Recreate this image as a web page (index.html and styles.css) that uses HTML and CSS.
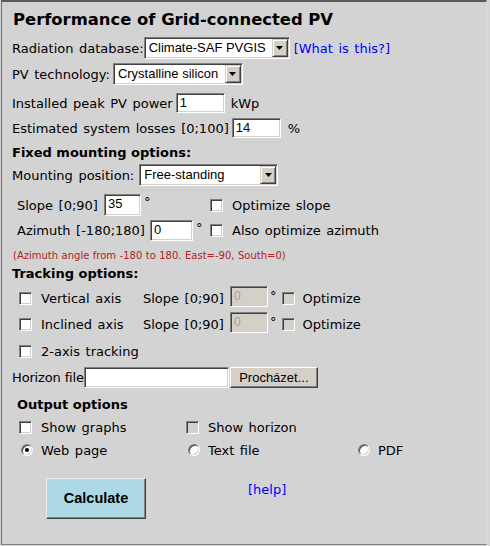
FILE: index.html
```html
<!DOCTYPE html>
<html>
<head>
<meta charset="utf-8">
<link rel="stylesheet" href="styles.css">
</head>
<body>
<div class="panel">
  <div class="title">Performance of Grid-connected PV</div>

  <div class="row r-db">
    <span class="lbl">Radiation database:</span>
    <span class="select w-db"><span class="sv">Climate-SAF PVGIS</span><span class="sb"><svg width="7" height="4" viewBox="0 0 7 4"><path d="M0 0h7L3.5 4z" fill="#000"/></svg></span></span>
    <a class="link what">[What is this?]</a>
  </div>

  <div class="row r-tech">
    <span class="lbl">PV technology:</span>
    <span class="select w-tech"><span class="sv">Crystalline silicon</span><span class="sb"><svg width="7" height="4" viewBox="0 0 7 4"><path d="M0 0h7L3.5 4z" fill="#000"/></svg></span></span>
  </div>

  <div class="row r-peak">
    <span class="lbl">Installed peak PV power</span>
    <span class="input w-peak">1</span>
    <span class="unit u-kwp">kWp</span>
  </div>

  <div class="row r-loss">
    <span class="lbl">Estimated system losses [0;100]</span>
    <span class="input w-loss">14</span>
    <span class="unit u-pct">%</span>
  </div>

  <div class="row r-fixed heading">Fixed mounting options:</div>

  <div class="row r-mount">
    <span class="lbl">Mounting position:</span>
    <span class="select w-mount"><span class="sv">Free-standing</span><span class="sb"><svg width="7" height="4" viewBox="0 0 7 4"><path d="M0 0h7L3.5 4z" fill="#000"/></svg></span></span>
  </div>

  <div class="row r-slope indent">
    <span class="angle-group">
      <span class="lbl">Slope [0;90]</span>
      <span class="input w-slope">35</span>
      <span class="deg">°</span>
    </span>
    <span class="cb"></span>
    <span class="cbl">Optimize slope</span>
  </div>

  <div class="row r-azi indent">
    <span class="angle-group">
      <span class="lbl">Azimuth [-180;180]</span>
      <span class="input w-azi">0</span>
      <span class="deg">°</span>
    </span>
    <span class="cb"></span>
    <span class="cbl">Also optimize azimuth</span>
  </div>

  <div class="row r-note note">(Azimuth angle from -180 to 180. East=-90, South=0)</div>

  <div class="row r-track heading">Tracking options:</div>

  <div class="row r-vert track">
    <span class="cb"></span>
    <span class="tname">Vertical axis</span>
    <span class="tslope">Slope [0;90]</span>
    <span class="input disabled w-track">0</span>
    <span class="deg d-track">°</span>
    <span class="cb cb-gray"></span>
    <span class="cbl">Optimize</span>
  </div>

  <div class="row r-incl track">
    <span class="cb"></span>
    <span class="tname">Inclined axis</span>
    <span class="tslope">Slope [0;90]</span>
    <span class="input disabled w-track">0</span>
    <span class="deg d-track">°</span>
    <span class="cb cb-gray"></span>
    <span class="cbl">Optimize</span>
  </div>

  <div class="row r-2axis track">
    <span class="cb"></span>
    <span class="tname">2-axis tracking</span>
  </div>

  <div class="row r-horizon">
    <span class="lbl hlbl">Horizon file</span>
    <span class="input w-file"></span>
    <span class="btn browse">Procházet...</span>
  </div>

  <div class="row r-output heading out-head">Output options</div>

  <div class="row r-graphs outgrid">
    <span class="ocol c1"><span class="cb"></span><span class="cbl">Show graphs</span></span>
    <span class="ocol c2"><span class="cb cb-disabled"></span><span class="cbl">Show horizon</span></span>
  </div>

  <div class="row r-web outgrid">
    <span class="ocol c1 rc"><span class="radio checked"></span><span class="cbl">Web page</span></span>
    <span class="ocol c2 rc"><span class="radio"></span><span class="cbl">Text file</span></span>
    <span class="ocol c3 rc"><span class="radio"></span><span class="cbl">PDF</span></span>
  </div>

  <div class="row r-calc">
    <span class="btn calc">Calculate</span>
    <a class="link help">[help]</a>
  </div>
</div>
</body>
</html>
```

FILE: styles.css
```css
html, body {
  margin: 0;
  padding: 0;
  background: #d6d6d6;
}

body {
  width: 490px;
  height: 546px;
  font-family: "DejaVu Sans", Verdana, sans-serif;
  font-size: 13px;
  color: #000;
}

.panel {
  box-sizing: border-box;
  margin-left: 1px;
  width: 486px;
  height: 545px;
  background: #d3d3d3;
  border-top: 2px solid #5a5a5a;
  border-left: 1px solid #6e6e6e;
  border-bottom: 1px solid #808080;
  border-right: 1px solid #dadada;
  padding: 6px 0 0 10px;
  word-spacing: 1.4px;
}

.title {
  height: 24px;
  line-height: 24px;
  font-weight: bold;
  font-size: 16.4px;
  padding-left: 1px;
  word-spacing: 0;
}

.row {
  display: flex;
  align-items: center;
  height: 21px;
  white-space: nowrap;
}

.lbl { display: inline-block; }

/* vertical rhythm */
.r-db { margin-top: 5px; height: 22px; }
.r-tech { margin-top: 4px; height: 22px; }
.r-peak { margin-top: 8px; height: 20px; }
.r-loss { margin-top: 5px; height: 20px; }
.r-fixed { margin-top: 4px; height: 20px; }
.r-mount { margin-top: 2px; height: 22px; }
.r-slope { margin-top: 8px; height: 22px; }
.r-azi { margin-top: 4px; height: 21px; }
.r-note { margin-top: 7px; height: 14px; }
.r-track { margin-top: 1px; height: 20px; }
.r-vert { margin-top: 5px; height: 21px; }
.r-incl { margin-top: 5px; height: 21px; }
.r-2axis { margin-top: 6px; height: 20px; }
.r-horizon { margin-top: 6px; height: 21px; }
.r-output { margin-top: 6px; height: 20px; }
.r-graphs { margin-top: 3px; height: 20px; }
.r-web { margin-top: 3px; height: 20px; }
.r-calc { margin-top: 18px; height: 40px; }

.heading {
  font-weight: bold;
  font-size: 13px;
  word-spacing: 0;
}

.out-head { padding-left: 5px; }

/* select look */
.select {
  box-sizing: border-box;
  display: inline-flex;
  align-items: stretch;
  height: 22px;
  background: #fff;
  border: 1px solid;
  border-color: #808080 #fff #fff #808080;
  box-shadow: inset 1px 1px 0 #404040, inset -1px -1px 0 #d4d0c8;
  padding: 1px;
  font-family: "Liberation Sans", Arial, sans-serif;
  font-size: 13px;
  word-spacing: 0;
}
.sv {
  flex: 1;
  padding-left: 3px;
  line-height: 18px;
  overflow: hidden;
}
.sb {
  box-sizing: border-box;
  width: 16px;
  display: flex;
  align-items: center;
  justify-content: center;
  background: #d4d0c8;
  border: 1px solid;
  border-color: #d4d0c8 #404040 #404040 #d4d0c8;
  box-shadow: inset 1px 1px 0 #fff, inset -1px -1px 0 #808080;
}
.sb svg { display: block; }

.w-db { width: 146px; margin-left: 0; }
.w-tech { width: 130px; margin-left: 3px; }
.w-mount { width: 139px; margin-left: 5px; }

.link {
  color: #0000ff;
  text-decoration: none;
}
.what { margin-left: 4px; }

/* text input look */
.input {
  box-sizing: border-box;
  display: inline-block;
  height: 20px;
  background: #fff;
  border: 1px solid;
  border-color: #808080 #fff #fff #808080;
  box-shadow: inset 1px 1px 0 #404040, inset -1px -1px 0 #d4d0c8;
  padding: 0 3px;
  font-family: "Liberation Sans", Arial, sans-serif;
  font-size: 13px;
  line-height: 18px;
  word-spacing: 0;
}
.input.disabled {
  background: #d4d0c8;
  color: #a0a0a0;
  font-size: 12px;
}

.w-peak { width: 49px; margin-left: 3px; }
.w-loss { width: 49px; margin-left: 3px; }
.u-kwp { margin-left: 6px; }
.u-pct { margin-left: 7px; }

.indent { padding-left: 5px; }
.angle-group {
  display: inline-flex;
  align-items: center;
  width: 193px;
}
.w-slope { width: 37px; height: 22px; margin-left: 6px; }
.w-azi { width: 43px; height: 21px; margin-left: 5px; }
.deg { margin-left: 3px; align-self: flex-start; line-height: 16px; }

/* checkbox */
.cb {
  box-sizing: border-box;
  display: inline-block;
  width: 13px;
  height: 13px;
  flex: none;
  background: #fff;
  border: 1px solid;
  border-color: #808080 #fff #fff #808080;
  box-shadow: inset 1px 1px 0 #404040, inset -1px -1px 0 #d4d0c8;
}
.cb-gray, .cb-disabled { background: #d4d0c8; }
.cbl { margin-left: 9px; }

.note {
  color: #b22222;
  font-size: 10px;
  word-spacing: 0.3px;
  padding-left: 1px;
}

/* tracking rows */
.track { padding-left: 7px; }
.tname { margin-left: 9px; width: 102px; }
.tslope { width: 87px; }
.w-track { width: 38px; height: 21px; margin-bottom: 4px; }
.d-track { margin-left: 2px; margin-right: 5px; }
.track .cbl { margin-left: 8px; }

/* horizon file */
.hlbl { word-spacing: 0; letter-spacing: -0.15px; }
.w-file { width: 145px; height: 21px; margin-left: 0; }
.btn {
  box-sizing: border-box;
  display: inline-flex;
  align-items: center;
  justify-content: center;
  font-family: "Liberation Sans", Arial, sans-serif;
  font-size: 13px;
  word-spacing: 0;
  background: #d4d0c8;
  border: 1px solid;
  border-color: #fff #404040 #404040 #fff;
  box-shadow: inset -1px -1px 0 #808080, inset 1px 1px 0 #d4d0c8;
}
.browse { width: 88px; height: 21px; margin-left: 1px; }

/* output grid */
.outgrid { padding-left: 7px; }
.ocol { display: inline-flex; align-items: center; }
.c1 { width: 167px; }
.c2 { width: 172px; }
.c1.rc { padding-left: 2px; width: 165px; }
.c2.rc { padding-left: 2px; width: 170px; }
.rc .cbl { margin-left: 8px; }

.radio {
  box-sizing: border-box;
  display: inline-block;
  width: 12px;
  height: 12px;
  flex: none;
  border-radius: 50%;
  background: #fff;
  border: 1px solid;
  border-color: #808080 #fff #fff #808080;
  box-shadow: inset 1px 1px 0 #404040, inset -1px -1px 0 #d4d0c8;
  position: relative;
}
.radio.checked::after {
  content: "";
  position: absolute;
  left: 3px;
  top: 3px;
  width: 4px;
  height: 4px;
  border-radius: 50%;
  background: #000;
}

/* calculate */
.calc {
  width: 100px;
  height: 41px;
  margin-left: 34px;
  background: #add8e6;
  font-weight: bold;
  font-size: 14.5px;
  border-color: #e8e8e8 #404040 #404040 #e8e8e8;
}
.help {
  margin-left: 102px;
  align-self: flex-start;
  margin-top: 4px;
}
```
